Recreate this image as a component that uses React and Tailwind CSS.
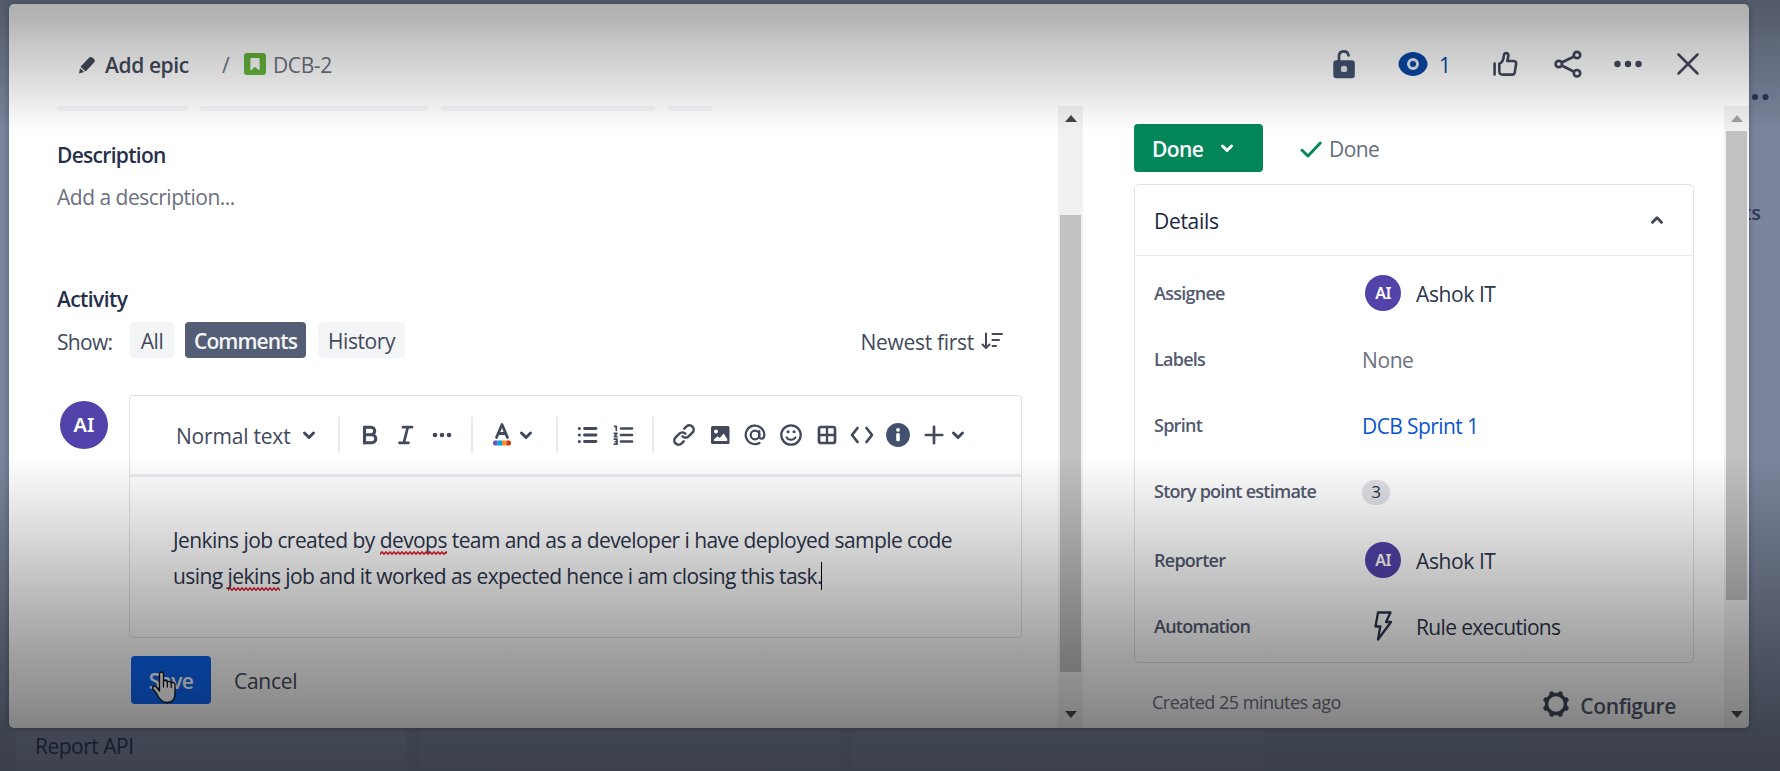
import React from "react";

const Chevron = ({ up, className = "" }) => (
  <svg viewBox="0 0 24 24" className={"h-6 w-6 shrink-0 " + className} fill="none" stroke="currentColor" strokeWidth="3" strokeLinecap="round" strokeLinejoin="round">
    <path d={up ? "M7.5 14.3 12 9.8l4.5 4.5" : "M7.5 10 12 14.5 16.5 10"} />
  </svg>
);

const Icon = ({ children, className = "" }) => (
  <svg viewBox="0 0 24 24" className={"h-6 w-6 shrink-0 overflow-visible " + className} fill="none" stroke="currentColor" strokeWidth="2.4" strokeLinecap="round" strokeLinejoin="round">
    {children}
  </svg>
);

const Divider = ({ className }) => <div className={"h-9 w-0.5 shrink-0 bg-[#e9eaee] " + className} />;

const Dots = ({ r = 2.9, gap = 10.5, className = "" }) => (
  <svg viewBox="0 0 32 24" className={"h-6 w-8 shrink-0 " + className} fill="currentColor">
    <circle cx={16 - gap} cy="12" r={r} />
    <circle cx="16" cy="12" r={r} />
    <circle cx={16 + gap} cy="12" r={r} />
  </svg>
);

function Scrollbar({ thumb, mutedUp }) {
  return (
    <div className="relative flex h-full w-[25px] shrink-0 flex-col items-center bg-[#f1f1f1]">
      <svg viewBox="0 0 12 7" className={"mt-[9px] h-[7px] w-3 " + (mutedUp ? "text-[#a0a0a0]" : "text-[#404347]")} fill="currentColor"><path d="M0 7 6 0l6 7z" /></svg>
      <div className={"w-[21px] bg-[#c1c1c1] " + thumb} />
      <svg viewBox="0 0 12 7" className="mt-auto mb-2.5 h-[7px] w-3 text-[#484b50]" fill="currentColor"><path d="M0 0h12L6 7z" /></svg>
    </div>
  );
}

function Header() {
  return (
    <div className="flex h-[102px] shrink-0 items-center pt-[22px] text-[#42495c]">
      <svg viewBox="0 0 18 18" className="-mt-[3px] ml-[69px] h-[18px] w-[18px] shrink-0" fill="currentColor">
        <path d="M2.500 10.800 11 1.800c.9-1 2.300-1.100 3.300-.2l1.700 1.500c1 .9 1 2.300.1 3.300l-8.500 9.200zM2 12.200 6.300 16 1 17.600z" />
      </svg>
      <span className="ml-[9px] w-[117px] text-[21px] font-semibold tracking-[-0.4px]">Add epic</span>
      <span className="w-[22px] text-[21px] text-[#6b7080]">/</span>
      <svg viewBox="0 0 22 22" className="-mt-[4px] h-[22px] w-[22px] shrink-0">
        <rect width="22" height="22" rx="3" fill="#65b53c" />
        <path d="M7 5.500h8v11l-4-3.800-4 3.800z" fill="#fff" stroke="#fff" strokeWidth="1.200" strokeLinejoin="round" />
      </svg>
      <span className="ml-[7px] text-[21px] tracking-[-0.4px] text-[#6b7080]">DCB-2</span>

      <svg viewBox="0 0 24 30" className="-mt-[5px] ml-auto h-[30px] w-6 shrink-0" fill="none">
        <path d="M7 12V7.500C7 4.200 9 2.400 11.700 2.400s4.500 1.700 4.800 4" stroke="#42526e" strokeWidth="2.700" strokeLinecap="round" />
        <rect x="1.300" y="11.200" width="21.500" height="18" rx="3" fill="#42526e" />
        <circle cx="12" cy="20" r="3.200" fill="#e6e8ea" />
      </svg>
      <svg viewBox="0 0 30 24" className="-mt-[5px] ml-[42px] h-6 w-[30px] shrink-0">
        <path d="M15 0C22 0 29.500 5.500 29.500 12S22 24 15 24 .5 18.500.5 12 8 0 15 0z" fill="#0747a6" />
        <circle cx="15" cy="12" r="4.500" fill="none" stroke="#e9eef8" strokeWidth="2.900" />
      </svg>
      <span className="ml-[11px] w-[12px] text-[21px] text-[#0747a6]">1</span>
      <svg viewBox="0 0 26 26" className="-mt-[4px] ml-[41px] h-[26px] w-[26px] shrink-0" fill="none" stroke="currentColor" strokeWidth="2.600" strokeLinejoin="round" strokeLinecap="round">
        <path d="M2.600 12.500v11" />
        <path d="M7.300 12.800c2.600-.8 4.200-4 4.600-8.300.2-3.800 4.900-3 4.400.6-.2 1.800-.6 3.300-1 4.900h6.400c2 0 2.800 1.500 2.400 3.200l-1.400 8.200c-.3 1.500-1 2.200-2.400 2.200h-9.600c-2.300 0-3.400-1-3.400-3z" />
      </svg>
      <svg viewBox="0 0 28 28" className="-mt-[5px] ml-[36px] h-7 w-7 shrink-0" fill="none" stroke="currentColor" strokeWidth="2.700">
        <circle cx="4.800" cy="14" r="3.200" /><circle cx="23" cy="5" r="3.200" /><circle cx="23" cy="23.200" r="3.200" />
        <path d="m7.700 12.500 12.400-6M7.700 15.500l12.400 6.200" />
      </svg>
      <Dots className="-mt-[5px] ml-[30px]" r={3.2} />
      <svg viewBox="0 0 22 22" className="-mt-[5px] ml-[33px] mr-[50px] h-[22px] w-[22px] shrink-0" fill="none" stroke="currentColor" strokeWidth="2.500" strokeLinecap="round"><path d="m1.500 1.500 19 19M20.500 1.500l-19 19" /></svg>
    </div>
  );
}

function Toolbar() {
  return (
    <div className="flex h-[78px] shrink-0 items-center pl-[46px] text-[#42495c]">
      <span className="w-[121px] whitespace-nowrap pt-[2px] text-[21px] tracking-[-0.2px]">Normal text</span>
      <Chevron />
      <Divider className="ml-[17px]" />
      <Icon className="ml-[18px]"><path d="M6.500 4v16M6.500 4.300h6.500a3.700 3.700 0 0 1 0 7.400H6.500M6.500 11.700h7.300a4 4 0 0 1 0 8H6.500" strokeWidth="3.100" /></Icon>
      <Icon className="ml-[12px]"><path d="M9 4.200h9M5.500 19.800h9M13.800 4.200 9.800 19.800" strokeWidth="2.700" /></Icon>
      <Dots className="ml-[8px]" r={2.3} gap={7} />
      <Divider className="ml-[13px]" />
      <svg viewBox="0 0 24 24" className="ml-[17px] h-6 w-6 shrink-0 overflow-visible">
        <path d="m6.500 14.500 5.500-13 5.500 13M8.200 10.500h7.600" fill="none" stroke="#42495c" strokeWidth="2.800" strokeLinejoin="round" strokeLinecap="round" />
        <path d="M5 17.500h2.500v5H5a2 2 0 0 1-2-2v-1a2 2 0 0 1 2-2z" fill="#6554c0" />
        <path d="M7.500 17.500H12v5H7.500z" fill="#00a3d8" /><path d="M12 17.500h4.500v5H12z" fill="#ff8b2a" />
        <path d="M16.500 17.500H19a2 2 0 0 1 2 2v1a2 2 0 0 1-2 2h-2.500z" fill="#d0390a" />
      </svg>
      <Chevron />
      <Divider className="ml-[18px]" />
      <Icon className="ml-[17px]"><path d="M9.500 5.500h11.500M9.500 12h11.500M9.500 18.500h11.500" strokeWidth="2.800" /><path d="M4.300 5.500h.1M4.300 12h.1M4.300 18.500h.1" strokeWidth="3" /></Icon>
      <Icon className="ml-[12px]">
        <path d="M10 5.500h11M10 12h11M10 18.500h11" strokeWidth="2.700" />
        <path d="M3.500 3.300h1.800v4M3.300 10.300h2.700l-2.500 3.300H6M3.300 16.200H6v5H3.300M4.300 18.700H6" strokeWidth="1.700" />
      </Icon>
      <Divider className="ml-[17px]" />
      <div className="ml-[18px] flex items-center gap-[11.7px]">
        <Icon>
          <path d="M10.600 13.400a4.300 4.300 0 0 0 6 0l4-4a4.250 4.250 0 0 0-6-6l-2.300 2.300" strokeWidth="2.500" />
          <path d="M13.400 10.600a4.300 4.300 0 0 0-6 0l-4 4a4.250 4.250 0 0 0 6 6l2.300-2.300" strokeWidth="2.500" />
        </Icon>
        <svg viewBox="0 0 24 24" className="h-6 w-6 shrink-0"><rect x="3" y="3" width="18.500" height="18" rx="1.500" fill="#42495c" /><circle cx="8" cy="8.500" r="2" fill="#fff" /><path d="M6 18v-1.500l3.500-3.200 2.200 1.700 4-4.500 3.500 5.500v2z" fill="#fff" /></svg>
        <Icon><circle cx="12" cy="12" r="4.300" strokeWidth="2.200" /><path d="M16.300 8v5.200c0 3.800 5 3.300 5-1.200A9.300 9.300 0 1 0 16.500 20" strokeWidth="2.200" /></Icon>
        <Icon><circle cx="12" cy="12" r="9.700" strokeWidth="2.300" /><path d="M7.500 14.300c1.700 3.300 7.300 3.300 9 0" strokeWidth="2" /><path d="M9 8.700h.1M15 8.700h.1" strokeWidth="3" /></Icon>
        <Icon><rect x="4" y="4" width="16" height="16" rx="2" strokeWidth="2.700" /><path d="M12 4v16M4 12h16" strokeWidth="2.300" /></Icon>
        <Icon><path d="M7.500 5 2 12l5.500 7M16.500 5l5.500 7-5.500 7" strokeWidth="2.700" /></Icon>
        <svg viewBox="0 0 24 24" className="h-6 w-6 shrink-0"><circle cx="12" cy="12" r="11.900" fill="#42526e" /><circle cx="12" cy="6.800" r="1.900" fill="#fff" /><rect x="10.200" y="10" width="3.600" height="8.300" rx="1.500" fill="#fff" /></svg>
        <Icon><path d="M12 3.800v16.400M3.800 12h16.400" strokeWidth="2.700" /></Icon>
      </div>
      <Chevron />
    </div>
  );
}

/* A word flagged by the spell checker. */
const Misspelt = ({ id, children }) => (
  <span className="relative">
    {children}
    <svg className="absolute bottom-[-1px] left-0 h-1 w-full">
      <defs>
        <pattern id={id} width="4" height="4" patternUnits="userSpaceOnUse">
          <path d="M-1 2.400 0 3.200 2 .9l2 2.300 1-.8" fill="none" stroke="#dc1c2c" strokeWidth="1.500" />
        </pattern>
      </defs>
      <rect width="100%" height="4" fill={`url(#${id})`} />
    </svg>
  </span>
);

function LeftPane() {
  return (
    <div className="flex h-full w-[1049px] shrink-0 flex-col pl-12 text-[21px] leading-7 text-[#42495c]">
      <div className="flex h-[5px] shrink-0 gap-3">
        <div className="w-[131px] rounded-b bg-[#f4f5f7]" />
        <div className="w-[229px] rounded-b bg-[#f4f5f7]" />
        <div className="w-[214px] rounded-b bg-[#f4f5f7]" />
        <div className="w-[46px] rounded-b bg-[#f4f5f7]" />
      </div>
      <div className="mt-[30px] tracking-[-0.700px] font-semibold text-[#262f48]">Description</div>
      <div className="mt-3.5 tracking-[-0.5px] text-[#6b7080]">Add a description...</div>
      <div className="mt-[74px] tracking-[-0.600px] font-semibold text-[#262f48]">Activity</div>
      <div className="mt-[9px] flex h-9 items-center">
        <span className="w-[73px] pt-[3px] tracking-[-0.7px]">Show:</span>
        <span className="flex h-9 w-[44px] items-center justify-center rounded bg-[#f4f5f7] pt-[2px] font-medium tracking-[-0.5px]">All</span>
        <span className="ml-[11px] flex h-9 w-[121px] items-center justify-center rounded bg-[#535d75] pt-[2px] font-semibold tracking-[-0.9px] text-[#f4f5f7]">Comments</span>
        <span className="ml-[12px] flex h-9 w-[87px] items-center justify-center rounded bg-[#f4f5f7] pt-[2px] font-medium tracking-[-0.4px]">History</span>
        <span className="ml-auto pt-[4px] font-medium tracking-[-0.3px]">Newest first</span>
        <svg viewBox="0 0 22 18" className="ml-[7px] mr-[55px] mt-[2px] h-[18px] w-[22px]" fill="none" stroke="currentColor" strokeWidth="2" strokeLinecap="round" strokeLinejoin="round">
          <path d="M5 1.500v14M1.500 12.500 5 16l3.500-3.500M11.500 2H21M11.500 8h6.500M11.500 14h3.500" />
        </svg>
      </div>
      <div className="mt-[37px] flex h-[243px]">
        <div className="ml-[3px] mt-1.5 flex h-12 w-12 shrink-0 items-center justify-center rounded-full bg-[#5243aa] font-['Noto_Sans',sans-serif] text-[20px] font-semibold text-white">AI</div>
        <div className="ml-[21px] flex w-[893px] flex-col rounded border border-[#dfe1e6] bg-white">
          <Toolbar />
          <div className="h-[3px] shrink-0 bg-[#ebecf0]" />
          <div className="whitespace-nowrap pl-[43px] pt-[45px] leading-9 tracking-[-0.57px] text-[#2c354c]">
            <div>Jenkins job created by <Misspelt id="flag-a">devops</Misspelt> team and as a developer i have deployed sample code</div>
            <div className="flex items-center"><span>using <Misspelt id="flag-b">jekins</Misspelt> job and it worked as expected hence i am closing this task.</span><span className="-ml-px h-7 w-[1.500px] bg-black" /></div>
          </div>
        </div>
      </div>
      <div className="mt-[18px] flex h-12 items-center">
        <div className="relative ml-[74px] flex h-12 w-20 items-center justify-center rounded bg-[#0c66f4] pt-[2px] font-semibold tracking-[-0.6px] text-white">
          Save
          <svg viewBox="0 0 26 33" className="absolute left-5 top-[15px] h-[33px] w-[26px]" fill="#fff" stroke="#111" strokeWidth="1.300" strokeLinejoin="round" strokeLinecap="round">
            <path d="M8.500 20V3c0-2.700 4-2.700 4 0v8c.3-2.200 3.900-2 3.900.5.6-1.800 3.700-1.500 3.800.8.900-1.500 3.800-1 3.800 1.500V22c0 6-3 9.500-8 9.500-4.500 0-7-2.500-9-6.500-1.500-3-3.500-5.500-5.500-7.500-.5-2 2.500-3 4-1.500z" />
            <path d="M12.500 11v5M16.400 12v4M20.200 13v3.500" />
          </svg>
        </div>
        <span className="ml-[23px] pt-[2px] font-medium tracking-[-0.3px]">Cancel</span>
      </div>
    </div>
  );
}

const Person = () => (
  <>
    <div className="ml-[3px] flex h-9 w-9 shrink-0 items-center justify-center rounded-full bg-[#5243aa] font-['Noto_Sans',sans-serif] text-[16px] font-semibold tracking-[-0.5px] text-white">AI</div>
    <span className="ml-[15px] pt-px tracking-[-0.4px]">Ashok IT</span>
  </>
);

const Row = ({ label, children, className = "" }) => (
  <div className={"flex h-[66px] shrink-0 items-center pl-[19px] text-[21px] text-[#2c354c] " + className}>
    <span className="-mt-px w-[208px] whitespace-nowrap text-[18px] font-semibold tracking-[-0.74px] text-[#535b70]">{label}</span>
    {children}
  </div>
);

const gearTeeth = [22.5, 67.5, 112.5, 157.5, 202.5, 247.5, 292.5, 337.5];

function RightPane() {
  return (
    <div className="flex h-full w-[641px] shrink-0 flex-col pl-[51px] text-[21px] leading-7 text-[#42495c]">
      <div className="mt-[18px] flex h-12 shrink-0 items-center">
        <div className="flex h-12 w-[129px] items-center rounded bg-[#03875a] pl-[18px] font-semibold tracking-[-0.6px] text-white">
          <span className="w-[63px] pt-[2px]">Done</span><Chevron />
        </div>
        <svg viewBox="0 0 22 17" className="ml-[37px] mt-[2px] h-[17px] w-[22px]" fill="none" stroke="#03875a" strokeWidth="2.900" strokeLinecap="round" strokeLinejoin="round"><path d="m2 9.300 6 5.700L20.300 2" /></svg>
        <span className="ml-[7px] pt-[2px] tracking-[-0.6px] text-[#666b7b]">Done</span>
      </div>
      <div className="mt-3 flex h-[479px] w-[560px] shrink-0 flex-col rounded-[5px] border border-[#dfe1e6]">
        <div className="flex h-[71px] shrink-0 items-center border-b border-[#e8eaee] pl-[19px] pr-[24px]">
          <span className="pt-[2px] font-medium tracking-[-0.3px] text-[#1b2540]">Details</span>
          <Chevron up className="ml-auto" />
        </div>
        <div className="flex flex-col pt-[4px]">
          <Row label="Assignee"><Person /></Row>
          <Row label="Labels"><span className="pt-px tracking-[-0.4px] text-[#6b7080]">None</span></Row>
          <Row label="Sprint"><span className="pt-px tracking-[-0.6px] text-[#0c55cc]">DCB Sprint 1</span></Row>
          <Row label="Story point estimate"><span className="mt-0.5 flex h-[25px] w-7 items-center justify-center rounded-full bg-[#dfe1e6] text-[17px]">3</span></Row>
          <Row label="Reporter" className="mt-[3px]"><Person /></Row>
          <Row label="Automation">
            <svg viewBox="0 0 18 30" className="ml-[12px] mr-[24px] h-[30px] w-[18px]" fill="none" stroke="currentColor" strokeWidth="2.300" strokeLinejoin="round"><path d="M4 1.500h12.500l-4.500 9.500h5L4 28.500l2.300-13H1.500z" /></svg>
            <span className="pt-px tracking-[-0.65px]">Rule executions</span>
          </Row>
        </div>
      </div>
      <div className="flex items-center pt-[27px]">
        <span className="-mt-1.5 ml-[18px] text-[18px] tracking-[-0.5px] text-[#6b7080]">Created 25 minutes ago</span>
        <svg viewBox="0 0 28 28" className="-mt-0.5 ml-auto h-7 w-7 overflow-visible" fill="currentColor">
          <circle cx="14" cy="14" r="9.500" fill="none" stroke="currentColor" strokeWidth="3.400" />
          {gearTeeth.map((a) => (
            <circle key={a} cx="14" cy="2.900" r="2.400" transform={`rotate(${a} 14 14)`} />
          ))}
        </svg>
        <span className="ml-[10px] mr-[48px] pt-[2px] font-semibold tracking-[-0.38px] text-[#4f586e]">Configure</span>
      </div>
    </div>
  );
}

export default function App() {
  return (
    <div className="relative h-[771px] w-[1780px] overflow-hidden bg-[#7a859b] font-['Open_Sans','Noto_Sans',sans-serif] text-[#2c3a58]">
      <div className="flex h-full flex-col items-end">
        <div className="mt-[85px] h-[26px] pr-[9px]"><Dots r={3.1} /></div>
        <div className="mt-[83px] pr-[19px] text-[20px] leading-[38px] font-semibold">ts</div>
        <div className="mt-auto flex h-[45px] w-full gap-[14px] pl-4">
          <div className="w-[391px] bg-[#808ba3] pl-[19px] pt-[6px] text-[21px] leading-7 tracking-[-0.5px]">Report API</div>
          <div className="w-[418px] bg-[#7d889e]" />
          <div className="w-[410px] bg-[#7d889e]" />
        </div>
      </div>
      <div className="absolute left-[9px] top-1 flex h-[724px] w-[1740px] flex-col overflow-hidden rounded-[5px] bg-white shadow-[0_0_6px_rgba(9,30,66,0.35)]">
        <Header />
        <div className="flex min-h-0 flex-1">
          <LeftPane />
          <Scrollbar thumb="mt-[93px] h-[457px]" />
          <RightPane />
          <Scrollbar thumb="mt-[9px] h-[469px]" mutedUp />
        </div>
      </div>
      <div className="pointer-events-none absolute inset-x-0 top-0 h-[132px] bg-[linear-gradient(to_bottom,rgba(0,0,0,0.320)_0%,rgba(0,0,0,0.290)_15%,rgba(0,0,0,0.225)_32%,rgba(0,0,0,0.170)_50%,rgba(0,0,0,0.110)_68%,rgba(0,0,0,0.050)_85%,rgba(0,0,0,0)_100%)]" />
      <div className="pointer-events-none absolute inset-x-0 bottom-0 h-[316px] bg-[linear-gradient(to_bottom,rgba(0,0,0,0)_0%,rgba(0,0,0,0.060)_10%,rgba(0,0,0,0.140)_24%,rgba(0,0,0,0.260)_43%,rgba(0,0,0,0.370)_62%,rgba(0,0,0,0.440)_78%,rgba(0,0,0,0.485)_86%,rgba(0,0,0,0.520)_100%)]" />
    </div>
  );
}
